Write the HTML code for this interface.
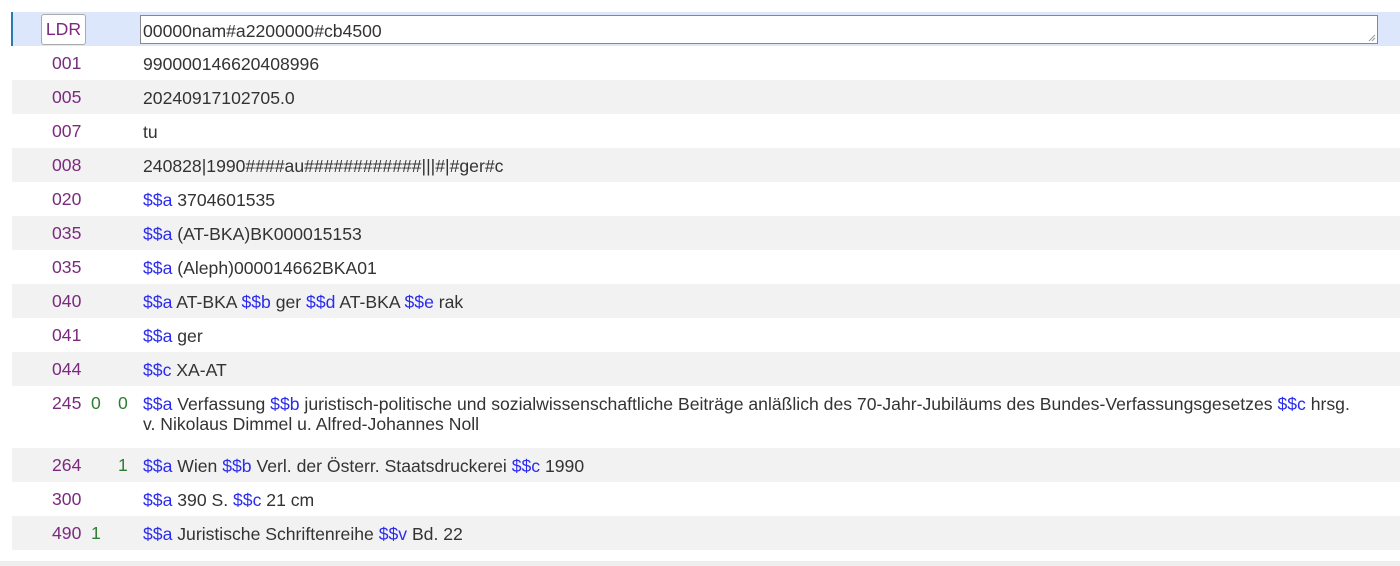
<!DOCTYPE html>
<html><head><meta charset="utf-8"><style>
body{margin:0;width:1400px;height:566px;background:#fff;font-family:"Liberation Sans",sans-serif;font-size:17.6px;color:#333;position:relative;overflow:hidden}
.r{position:absolute;left:12px;width:1388px;height:34px}
.g{background:#f2f2f2}
.t{position:absolute;left:40px;top:7px;color:#7b2a7e}
.i1{position:absolute;left:79px;top:7px;color:#2e7d32}
.i2{position:absolute;left:106px;top:7px;color:#2e7d32}
.c{position:absolute;left:131px;top:8px;right:22px;line-height:20px}
.s{color:#2b2bf0}
</style></head><body>
<div class="r" style="top:12px;background:#dce7fb"></div>
<div style="position:absolute;left:11px;top:12px;width:2px;height:34px;background:#2a7bb0"></div>
<div style="position:absolute;left:41px;top:14px;width:43px;height:29px;border:1px solid #aaa;border-radius:3px;background:#fff;color:#7b2a7e;text-align:center;line-height:29px;box-sizing:content-box">LDR</div>
<div style="position:absolute;left:140px;top:15px;width:1236px;height:27px;border:1px solid #888;background:#fff;box-sizing:content-box"><span style="position:absolute;left:2px;top:5px">00000nam#a2200000#cb4500</span>
<svg style="position:absolute;right:1px;bottom:1px" width="8" height="8"><path d="M7 1L1 7M7 4L4 7" stroke="#999" stroke-width="1"/></svg></div>

<div class="r" style="top:46px"><span class="t">001</span><span class="c">990000146620408996</span></div>
<div class="r g" style="top:80px"><span class="t">005</span><span class="c">20240917102705.0</span></div>
<div class="r" style="top:114px"><span class="t">007</span><span class="c">tu</span></div>
<div class="r g" style="top:148px"><span class="t">008</span><span class="c">240828|1990####au############|||#|#ger#c</span></div>
<div class="r" style="top:182px"><span class="t">020</span><span class="c"><span class="s">$$a</span> 3704601535</span></div>
<div class="r g" style="top:216px"><span class="t">035</span><span class="c"><span class="s">$$a</span> (AT-BKA)BK000015153</span></div>
<div class="r" style="top:250px"><span class="t">035</span><span class="c"><span class="s">$$a</span> (Aleph)000014662BKA01</span></div>
<div class="r g" style="top:284px"><span class="t">040</span><span class="c"><span class="s">$$a</span> AT-BKA <span class="s">$$b</span> ger <span class="s">$$d</span> AT-BKA <span class="s">$$e</span> rak</span></div>
<div class="r" style="top:318px"><span class="t">041</span><span class="c"><span class="s">$$a</span> ger</span></div>
<div class="r g" style="top:352px"><span class="t">044</span><span class="c"><span class="s">$$c</span> XA-AT</span></div>
<div class="r" style="top:386px;height:62px"><span class="t">245</span><span class="i1">0</span><span class="i2">0</span><span class="c"><span class="s">$$a</span> Verfassung <span class="s">$$b</span> juristisch-politische und sozialwissenschaftliche Beiträge anläßlich des 70-Jahr-Jubiläums des Bundes-Verfassungsgesetzes <span class="s">$$c</span> hrsg.<br>v. Nikolaus Dimmel u. Alfred-Johannes Noll</span></div>
<div class="r g" style="top:448px"><span class="t">264</span><span class="i2">1</span><span class="c"><span class="s">$$a</span> Wien <span class="s">$$b</span> Verl. der Österr. Staatsdruckerei <span class="s">$$c</span> 1990</span></div>
<div class="r" style="top:482px"><span class="t">300</span><span class="c"><span class="s">$$a</span> 390 S. <span class="s">$$c</span> 21 cm</span></div>
<div class="r g" style="top:516px"><span class="t">490</span><span class="i1">1</span><span class="c"><span class="s">$$a</span> Juristische Schriftenreihe <span class="s">$$v</span> Bd. 22</span></div>
<div style="position:absolute;left:0;top:561px;width:1400px;height:5px;background:#eee"></div>
</body></html>
